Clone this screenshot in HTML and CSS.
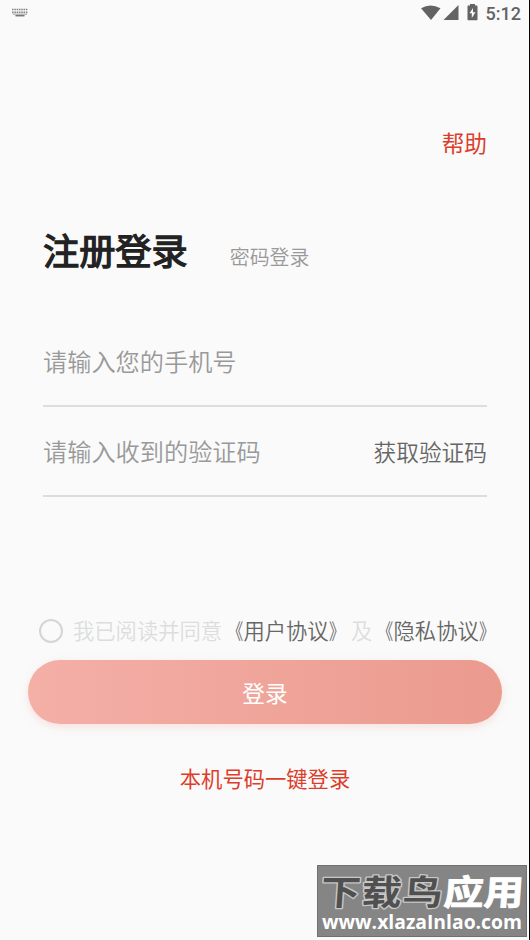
FILE: index.html
```html
<!DOCTYPE html>
<html lang="zh-CN">
<head>
<meta charset="utf-8">
<title>注册登录</title>
<link rel="stylesheet" href="styles.css">
</head>
<body>
<div class="screen">
  <header class="status">
    <svg class="keyboard" width="16" height="10" viewBox="0 0 16 10">
      <path d="M0 1.5h16M0 4.3h16" stroke="#858585" stroke-width="1.7" stroke-dasharray="1.6 .7"/>
      <path d="M1 6.3h14" stroke="#aaa" stroke-width="1"/>
      <path d="M3.5 7.7h9" stroke="#777" stroke-width="1.5"/>
    </svg>
    <div class="indicators">
      <svg width="58" height="18" viewBox="0 0 58 18" fill="#636363">
        <path d="M0 4.2Q9.500-1 19.500 4.200L10 16Z"/>
        <path d="M37.500 1v15H22.500Z"/>
        <path fill-rule="evenodd" d="M49 1.500V0h5v1.500h1.700q.8 0 .8.8v13.200q0 .8-.8.8h-8.400q-.8 0-.8-.8V2.300q0-.8.8-.8zM52 4l-3.500 5.300h2.300V14l3.700-5.700h-2.500z"/>
      </svg>
      <span class="time">5:12</span>
    </div>
  </header>
  <a class="help">帮助</a>
  <div class="tabs">
    <h1>注册登录</h1>
    <span class="tab">密码登录</span>
  </div>
  <div class="field"><span>请输入您的手机号</span></div>
  <div class="field"><span>请输入收到的验证码</span><span class="code">获取验证码</span></div>
  <div class="agreement">
    <span class="radio"></span>
    <span>我已阅读并同意</span>
    <b><i class="open">《</i>用户协议<i class="close">》</i></b>
    <span class="and">及</span>
    <b><i class="open">《</i>隐私协议<i class="close">》</i></b>
  </div>
  <div class="login">登录</div>
  <a class="quick">本机号码一键登录</a>
  <svg class="watermark" width="210" height="72" viewBox="0 0 210 72">
    <rect x=".5" y=".5" width="209" height="71" fill="#858585" stroke="#707070"/>
    <g class="brand" transform="translate(3 40) skewX(-4) scale(1 .87)">
      <text class="brand-dark" x="0" y="0" textLength="122">下载鸟</text>
      <text class="brand-light" x="123" y="0" textLength="80">应用</text>
    </g>
    <text class="url" x="5" y="64" textLength="200" lengthAdjust="spacingAndGlyphs">www.xlazaInlao.com</text>
  </svg>
</div>
</body>
</html>
```
FILE: styles.css
```css
* { box-sizing: border-box; }
body { margin: 0; }
.screen {
  position: relative;
  display: flex;
  flex-direction: column;
  width: 530px;
  height: 940px;
  overflow: hidden;
  background: #fafafa;
  border-right: 1px solid #000;
  font-family: "Noto Sans CJK SC", sans-serif;
  white-space: nowrap;
}
.status {
  display: flex;
  justify-content: space-between;
  height: 28px;
  padding: 4px 8px 0 12px;
}
.keyboard { margin-top: 4px; }
.indicators { display: flex; gap: 7px; }
.time {
  font: 500 18px/20px Roboto, sans-serif;
  color: #636363;
}
.help {
  align-self: flex-end;
  margin: 97px 42px 0 0;
  font-size: 22.7px;
  line-height: 35px;
  color: #dc3e2b;
}
.tabs {
  display: flex;
  align-items: flex-start;
  height: 60px;
  margin: 59px 0 0 43px;
}
h1 {
  margin: 0;
  font-size: 36.2px;
  font-weight: 400;
  -webkit-text-stroke: 1.3px #222;
  line-height: 60px;
  color: #222;
}
.tab {
  margin: 18px 0 0 42px;
  font-size: 19.9px;
  font-weight: 350;
  line-height: 40px;
  color: #999;
}
.field {
  display: flex;
  justify-content: space-between;
  align-items: center;
  height: 90px;
  margin: 0 42px 0 43px;
  border-bottom: 2px solid #ddd;
  padding-bottom: 1px;
  font-size: 24.2px;
  font-weight: 350;
  color: #999;
}
.tabs + .field { margin-top: 38px; }
.code { padding-top: 1px; font-size: 22.7px; color: #666; }
.agreement {
  display: flex;
  align-items: center;
  height: 40px;
  margin: 113px 0 0 39px;
  padding-bottom: 2px;
  font-size: 21.3px;
  font-weight: 350;
  color: #ddd;
}
.agreement b { font-weight: 350; color: #666; }
.agreement i { display: inline-block; font-style: normal; }
.open { transform: scaleX(.75); transform-origin: right center; }
.close { transform: scaleX(.75); transform-origin: left center; }
.radio {
  position: relative;
  top: 2px;
  width: 24px;
  height: 24px;
  margin-right: 10px;
  border: 2px solid #d5d5d5;
  border-radius: 50%;
}
.and { margin-left: 1px; }
.login {
  height: 64px;
  margin: 10px 27px 0 28px;
  border-radius: 32px;
  background: linear-gradient(90deg, #f4afa7, #eb9a8e);
  box-shadow: 0 3px 8px rgba(235, 154, 142, .25);
  font-size: 22.7px;
  line-height: 65px;
  text-align: center;
  color: #fff;
}
.quick {
  margin: 38px 0 0 1px;
  font-size: 21.3px;
  line-height: 32px;
  text-align: center;
  color: #dc3e2b;
}
.watermark { position: absolute; left: 317px; top: 865px; overflow: visible; }
.brand { font-size: 40px; font-weight: 700; }
.brand-dark {
  fill: #505050;
  stroke: #c8c8c8;
  stroke-width: 3px;
  stroke-linejoin: round;
  paint-order: stroke;
}
.brand-light { fill: #fff; stroke: #fff; stroke-width: 1px; }
.url {
  font: 700 19px "Open Sans", sans-serif;
  fill: #fff;
}
```
